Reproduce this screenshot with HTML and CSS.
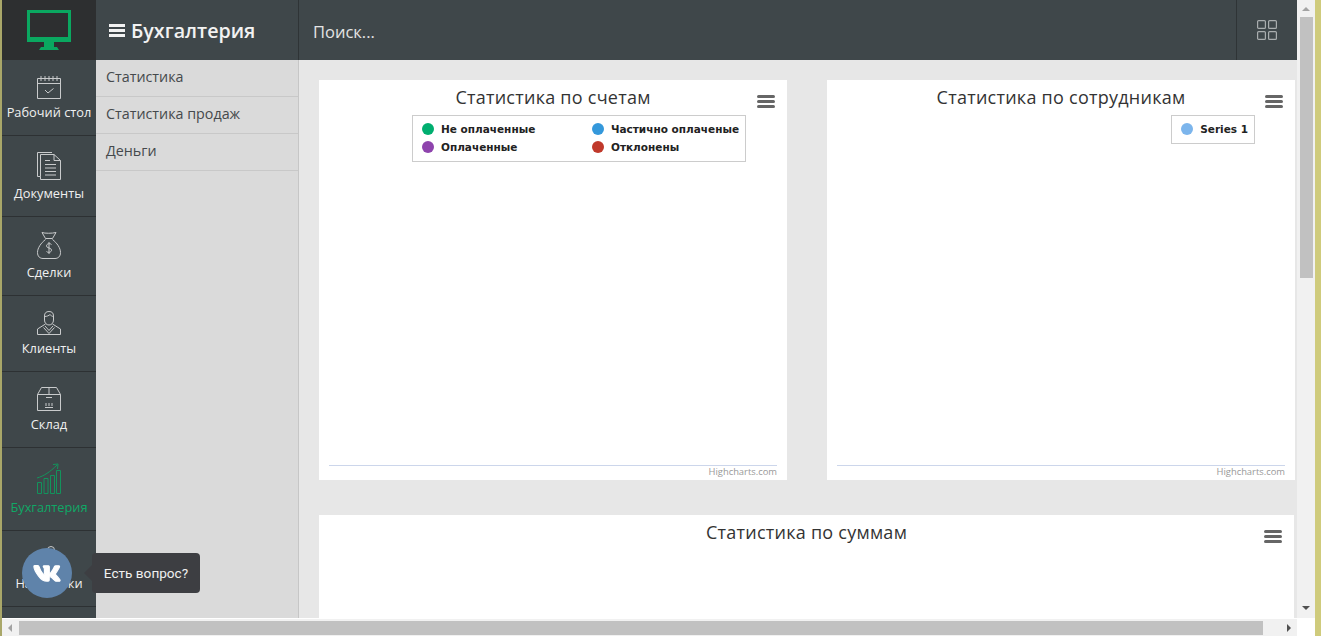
FILE: index.html
```html
<!DOCTYPE html>
<html lang="ru">

<head>
    <meta charset="UTF-8">
    <meta name="viewport" content="width=device-width, initial-scale=1.0">
    <title>Бухгалтерия</title>
    <link rel="stylesheet" href="styles.css">
</head>

<body>
    <div class="window">
        <div class="app">
            <header class="topbar">
                <a class="logo" href="#">
                    <svg width="44" height="40" viewBox="0 0 44 40">
                        <rect x="1.5" y="1.5" width="41" height="29" fill="none" stroke="#0aa860" stroke-width="3"/>
                        <rect x="0" y="27" width="44" height="4" fill="#0aa860"/>
                        <rect x="17" y="32" width="10" height="5" fill="#0aa860"/>
                        <path d="M12 40 L14 37 H30 L32 40 Z" fill="#0aa860"/>
                    </svg>
                </a>
                <div class="section-title">
                    <span class="burger"><i></i><i></i><i></i></span>
                    <span>Бухгалтерия</span>
                </div>
                <div class="search"><input type="text" placeholder="Поиск..."></div>
                <a class="apps" href="#">
                    <svg width="20" height="20" viewBox="0 0 20 20" fill="none" stroke="#a9adae" stroke-width="1.2">
                        <rect x="0.6" y="0.6" width="7.8" height="7.8" rx="1"/>
                        <rect x="11.6" y="0.6" width="7.8" height="7.8" rx="1"/>
                        <rect x="0.6" y="11.6" width="7.8" height="7.8" rx="1"/>
                        <rect x="11.6" y="11.6" width="7.8" height="7.8" rx="1"/>
                    </svg>
                </a>
            </header>

            <div class="body-row">
                <nav class="sidebar">
                    <a class="nav-item" href="#">
                        <svg class="nav-icon" width="24" height="24" viewBox="0 0 24 24">
                            <path d="M0.5 3.5H23.5V23.5H0.5ZM0.5 8.5H23.5M4 1V6M8 1V6M12 1V6M16 1V6M20 1V6M8 15L11 18L16.5 13.5"/>
                        </svg>
                        <span>Рабочий стол</span>
                    </a>
                    <a class="nav-item" href="#">
                        <svg class="nav-icon" width="24" height="29" viewBox="0 0 24 29">
                            <path d="M3.5 25.5H0.5V1.5H15M3.5 25.5V28.5H23.5V9.5L17 3.5H3.5ZM17 3.5V9.5H23.5M8 9.5H13M8 13.5H19M8 17H19M8 20.5H19M8 24H19"/>
                        </svg>
                        <span>Документы</span>
                    </a>
                    <a class="nav-item" href="#">
                        <svg class="nav-icon" width="24" height="27" viewBox="0 0 24 27">
                            <path d="M5 0.5C8 1.5 15 1.5 19 0.5L15.5 6.5H8.5ZM8.5 7.5C4 11 0.5 16 0.5 20.5C0.5 24.5 3 26.5 6 26.5H18C21 26.5 23.5 24.5 23.5 20.5C23.5 16 20 11 15.5 7.5M14.5 12.5C13 11 9.5 11.5 9.5 14C9.5 16.5 14.5 15.5 14.5 18C14.5 20.5 11 21 9.5 19.5M12 10V22"/>
                        </svg>
                        <span>Сделки</span>
                    </a>
                    <a class="nav-item" href="#">
                        <svg class="nav-icon" width="24" height="24" viewBox="0 0 24 24">
                            <path d="M7.5 5C7.5 2 9 0.5 12 0.5C15 0.5 16.5 2 16.5 5V9C16.5 12 14.5 14 12 14C9.5 14 7.5 12 7.5 9ZM7.5 5.5C10 5.5 12 4.5 13 3.5C14 4.5 15 5.5 16.5 5.5M8.5 13L0.5 18V23.5H23.5V18L15.5 13M8 15L12 19.5L16 15M6.5 16.5L12 22.5L17.5 16.5"/>
                        </svg>
                        <span>Клиенты</span>
                    </a>
                    <a class="nav-item" href="#">
                        <svg class="nav-icon" width="24" height="24" viewBox="0 0 24 24">
                            <path d="M0.5 7.5H23.5V23.5H0.5ZM0.5 7.5L4.5 0.5H19.5L23.5 7.5M12 0.5V7.5M9 10.5H15M9 16V19M12 16V19M15 16V19M8 20.5H16"/>
                        </svg>
                        <span>Склад</span>
                    </a>
                    <a class="nav-item active" href="#">
                        <svg class="nav-icon" width="24" height="31" viewBox="0 0 24 31">
                            <path d="M0.5 19.5H4.5V30.5H0.5ZM7 15.5H11V30.5H7ZM13.5 12.5H17.5V30.5H13.5ZM19.5 7.5H23.5V30.5H19.5ZM0 15C7 13 13 9 20 2M16 1.5L21 1L20.5 6"/>
                        </svg>
                        <span>Бухгалтерия</span>
                    </a>
                    <a class="nav-item" href="#">
                        <svg class="nav-icon" width="24" height="24" viewBox="0 0 24 24">
                            <circle cx="14" cy="4" r="3.5"/>
                            <path d="M2 14H22V23H2Z"/>
                        </svg>
                        <span>Настройки</span>
                    </a>
                </nav>

                <aside class="submenu">
                    <a href="#">Статистика</a>
                    <a href="#">Статистика продаж</a>
                    <a href="#">Деньги</a>
                </aside>

                <main class="content">
                    <section class="chart">
                        <h2 class="chart-title">Статистика по счетам</h2>
                        <span class="chart-menu"><i></i><i></i><i></i></span>
                        <ul class="legend legend-two">
                            <li><b class="dot dot-green"></b>Не оплаченные</li>
                            <li><b class="dot dot-blue"></b>Частично оплаченые</li>
                            <li><b class="dot dot-purple"></b>Оплаченные</li>
                            <li><b class="dot dot-red"></b>Отклонены</li>
                        </ul>
                        <div class="chart-credit">Highcharts.com</div>
                    </section>
                    <section class="chart">
                        <h2 class="chart-title">Статистика по сотрудникам</h2>
                        <span class="chart-menu"><i></i><i></i><i></i></span>
                        <ul class="legend">
                            <li><b class="dot dot-sky"></b>Series 1</li>
                        </ul>
                        <div class="chart-credit">Highcharts.com</div>
                    </section>
                    <section class="chart chart-wide">
                        <h2 class="chart-title">Статистика по суммам</h2>
                        <span class="chart-menu"><i></i><i></i><i></i></span>
                    </section>
                </main>
            </div>

            <div class="hscroll">
                <span class="arrow arrow-left"></span>
                <span class="hscroll-thumb"></span>
                <span class="arrow arrow-right"></span>
            </div>
        </div>

        <div class="vscroll">
            <span class="arrow arrow-up"></span>
            <span class="vscroll-thumb"></span>
            <span class="arrow arrow-down"></span>
            <span class="scroll-corner"></span>
        </div>
    </div>

    <!-- VK widget -->
    <a class="vk-button" href="#">
        <svg width="28" height="25" viewBox="0 0 576 512">
            <path fill="#fff" stroke="#fff" stroke-width="24" d="M545 117.7c3.7-12.5 0-21.7-17.8-21.7h-58.9c-15 0-21.9 7.9-25.6 16.7 0 0-29.5 72.6-71.2 119.7-13.5 13.6-19.6 18-27 18-3.7 0-9.2-4.4-9.2-16.9V117.7c0-15-4.2-21.7-16.6-21.7h-92.6c-9.4 0-15 7-15 13.5 0 14.2 21.2 17.5 23.4 57.2v86.8c0 19-3.4 22.4-10.9 22.4-20 0-68.6-73.4-97.4-157.4-5.8-16.3-11.5-22.9-26.6-22.9H38.8c-16.8 0-20.2 7.9-20.2 16.7 0 15.6 20 93.1 93.1 195.5C160.4 378.1 229 416 291.4 416c37.5 0 42.1-8.4 42.1-22.9 0-66.8-3.4-73.1 15.4-73.1 8.7 0 23.7 4.4 58.7 38.1 40 40 46.6 57.9 69 57.9h58.9c16.8 0 25.3-8.4 20.4-25-11.2-34.9-86.9-106.7-90.3-111.5-8.7-11.2-6.2-16.2 0-26.2.1-.1 72-101.3 79.4-135.6z"/>
        </svg>
    </a>
    <div class="vk-tooltip">Есть вопрос?</div>
</body>

</html>
```

FILE: styles.css
```css
html,
body {
    height: 100%;
}

body {
    margin: 0;
    overflow: hidden;
    background-color: #fff;
    font-family: "Open Sans", sans-serif;
    color: #333;
}

a {
    text-decoration: none;
}

.window {
    display: flex;
    height: 636px;
    width: 1313px;
    border-left: 2px solid #a9a769;
    border-right: 6px solid #cfcb7c;
}

.app {
    width: 1295px;
    height: 636px;
    display: flex;
    flex-direction: column;
}

/* Top bar */
.topbar {
    display: flex;
    flex: 0 0 60px;
    background-color: #3f474a;
}

.logo {
    flex: 0 0 94px;
    display: flex;
    justify-content: center;
    align-items: center;
    background-color: #2d2f30;
}

.section-title {
    flex: 0 0 203px;
    display: flex;
    align-items: center;
    gap: 6px;
    padding-left: 13px;
    box-sizing: border-box;
    border-right: 1px solid #2f3436;
    color: #f2f2f2;
    font-size: 19.7px;
    font-weight: 600;
    height: 60px;
}

.burger {
    display: flex;
    flex-direction: column;
    gap: 2px;
    width: 16px;
}

.burger i {
    display: block;
    height: 3px;
    background-color: #f2f2f2;
}

.search {
    flex: 1;
    display: flex;
    align-items: center;
    padding-left: 14px;
}

.search input {
    border: none;
    outline: none;
    background: transparent;
    padding: 0;
    font-family: "Open Sans", sans-serif;
    font-size: 16.5px;
    color: #e4e4e4;
    margin-top: 3px;
}

.search input::placeholder {
    color: #e4e4e4;
    opacity: 1;
}

.apps {
    flex: 0 0 60px;
    display: flex;
    justify-content: center;
    align-items: center;
    border-left: 1px solid #2f3436;
}

/* Main row */
.body-row {
    flex: 1;
    display: flex;
    min-height: 0;
}

.sidebar {
    flex: 0 0 94px;
    background-color: #3f474a;
    overflow: hidden;
}

.nav-item {
    display: flex;
    flex-direction: column;
    align-items: center;
    padding: 15px 0 16px;
    border-bottom: 1px solid #2d3133;
    color: #f0f0f0;
    font-size: 12.8px;
    line-height: 14px;
    white-space: nowrap;
}

.nav-icon {
    margin-bottom: 6px;
    fill: none;
    stroke: #c9cbcc;
    stroke-width: 1;
}

.nav-item.active {
    color: #0fa866;
}

.nav-item.active .nav-icon {
    stroke: #13935c;
}

.submenu {
    flex: 0 0 203px;
    box-sizing: border-box;
    background-color: #dadada;
    border-right: 1px solid #c6c6c6;
}

.submenu a {
    display: block;
    height: 37px;
    line-height: 34px;
    box-sizing: border-box;
    padding-left: 10px;
    border-bottom: 1px solid #c8c8c8;
    color: #45494c;
    font-size: 14.3px;
}

/* Charts */
.content {
    flex: 1;
    overflow: hidden;
    background-color: #e7e7e7;
    padding: 20px 0 0 20px;
    display: grid;
    grid-template-columns: 468px 468px;
    grid-auto-rows: 400px;
    column-gap: 40px;
    row-gap: 35px;
}

.chart {
    position: relative;
    display: flex;
    flex-direction: column;
    background-color: #fff;
}

.chart-wide {
    grid-column: 1 / 3;
    margin-right: 1px;
}

.chart-title {
    margin: 5px 0 0;
    text-align: center;
    font-size: 18px;
    line-height: 24px;
    font-weight: 400;
    color: #333;
    letter-spacing: 0.25px;
}

.chart-menu {
    position: absolute;
    top: 15px;
    right: 12px;
    display: flex;
    flex-direction: column;
    gap: 2px;
    width: 18px;
}

.chart-menu i {
    display: block;
    height: 3px;
    border-radius: 2px;
    background-color: #666;
}

.legend {
    list-style: none;
    align-self: flex-end;
    margin: 6px 40px 0 0;
    padding: 4px 6px 5px 9px;
    border: 1px solid #ccc;
    font-family: "DejaVu Sans", sans-serif;
    font-size: 10.5px;
    font-weight: 700;
    line-height: 18px;
    color: #222;
}

.legend-two {
    display: grid;
    grid-template-columns: 170px auto;
    margin-right: 41px;
}

.legend li {
    display: flex;
    align-items: center;
}

.dot {
    width: 12px;
    height: 12px;
    border-radius: 50%;
    margin-right: 7px;
}

.dot-green {
    background-color: #00ae6f;
}

.dot-blue {
    background-color: #3498db;
}

.dot-purple {
    background-color: #8e44ad;
}

.dot-red {
    background-color: #c0392b;
}

.dot-sky {
    background-color: #7cb5ec;
}

.chart-credit {
    margin: auto 10px 0;
    border-top: 1px solid #ccd6eb;
    padding: 0 0 3px;
    height: 11px;
    line-height: 11px;
    text-align: right;
    font-size: 9.4px;
    color: #999;
}

/* Scrollbars */
.hscroll {
    flex: 0 0 18px;
    display: flex;
    align-items: center;
    background-color: #f1f1f1;
    border-top: 1px solid #fff;
    box-sizing: border-box;
    padding: 0 6px;
}

.hscroll-thumb {
    width: 1244px;
    height: 14px;
    margin-left: 7px;
    background-color: #c1c1c1;
}

.vscroll {
    position: relative;
    flex: 0 0 18px;
    display: flex;
    flex-direction: column;
    align-items: center;
    background-color: #f1f1f1;
}

.vscroll-thumb {
    width: 13px;
    height: 261px;
    margin-top: 6px;
    background-color: #c1c1c1;
}

.scroll-corner {
    position: absolute;
    left: 0;
    bottom: 0;
    width: 18px;
    height: 18px;
    background-color: #fff;
}

.arrow {
    display: block;
    width: 0;
    height: 0;
    border-style: solid;
    border-color: transparent;
}

.arrow-up {
    margin-top: 7px;
    border-width: 0 4px 4px;
    border-bottom-color: #a3a3a3;
}

.arrow-down {
    position: absolute;
    top: 606px;
    border-width: 4px 4px 0;
    border-top-color: #505050;
}

.arrow-left {
    border-width: 4px 4px 4px 0;
    border-right-color: #a3a3a3;
}

.arrow-right {
    margin-left: 24px;
    border-width: 4px 0 4px 4px;
    border-left-color: #505050;
}

/* VK widget */
.vk-button {
    position: fixed;
    left: 22px;
    top: 548px;
    width: 50px;
    height: 50px;
    display: flex;
    justify-content: center;
    align-items: center;
    border-radius: 50%;
    background-color: #5f83aa;
}

.vk-tooltip {
    position: fixed;
    left: 92px;
    top: 553px;
    width: 108px;
    height: 40px;
    line-height: 40px;
    text-align: center;
    border-radius: 4px;
    background-color: #3d3e42;
    color: #f0f0f0;
    font-family: "Roboto", sans-serif;
    font-size: 13.6px;
}

.vk-tooltip::before {
    content: "";
    position: absolute;
    left: -8px;
    top: 12px;
    border-style: solid;
    border-width: 8px 8px 8px 0;
    border-color: transparent #3d3e42 transparent transparent;
}
```
